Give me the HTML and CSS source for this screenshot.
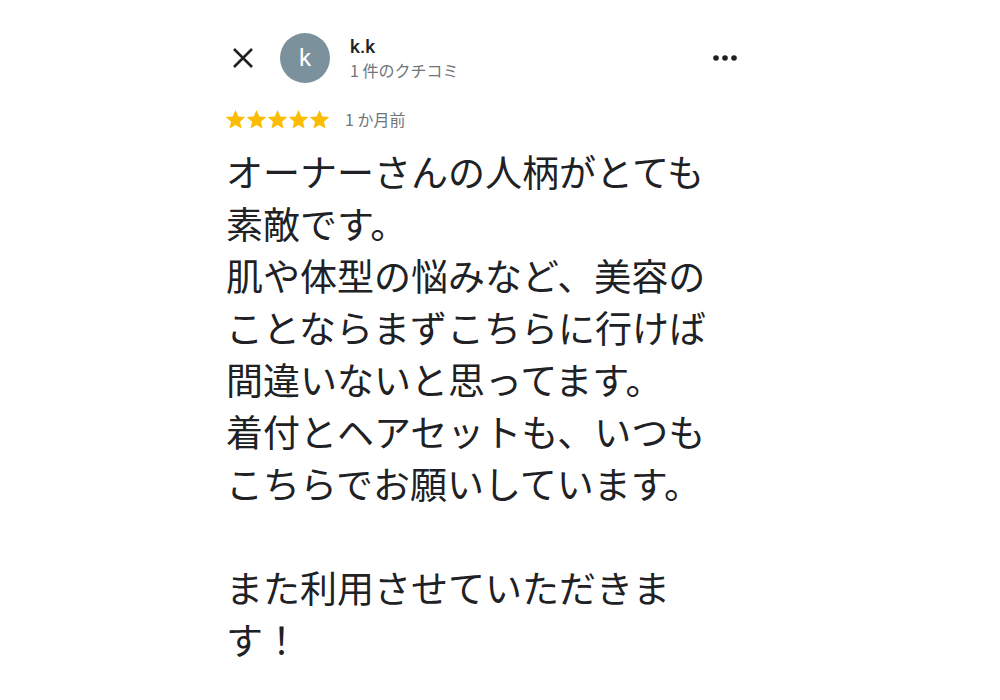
FILE: index.html
```html
<!DOCTYPE html>
<html lang="ja">
<head>
<meta charset="utf-8">
<link rel="stylesheet" href="styles.css">
</head>
<body>
<div class="review">
  <div class="header">
    <svg class="close" width="22" height="22" viewBox="0 0 22 22"><path d="M2 2L20 20M20 2L2 20" stroke="#202124" stroke-width="2.6" stroke-linecap="butt"/></svg>
    <div class="avatar">k</div>
    <div class="who">
      <div class="name">k.k</div>
      <div class="count">1 件のクチコミ</div>
    </div>
    <svg class="more" width="28" height="10" viewBox="0 0 28 10"><circle cx="5" cy="5" r="2.8" fill="#202124"/><circle cx="14" cy="5" r="2.8" fill="#202124"/><circle cx="23" cy="5" r="2.8" fill="#202124"/></svg>
  </div>
  <div class="meta">
    <div class="stars">
      <svg viewBox="0 0 24 24" width="21" height="21"><path d="M12 1.2l3.2 7.3 7.9.7-6 5.3 1.8 7.8L12 18.2 5.1 22.3l1.8-7.8-6-5.3 7.9-.7z" fill="#fbbc04"/></svg>
      <svg viewBox="0 0 24 24" width="21" height="21"><path d="M12 1.2l3.2 7.3 7.9.7-6 5.3 1.8 7.8L12 18.2 5.1 22.3l1.8-7.8-6-5.3 7.9-.7z" fill="#fbbc04"/></svg>
      <svg viewBox="0 0 24 24" width="21" height="21"><path d="M12 1.2l3.2 7.3 7.9.7-6 5.3 1.8 7.8L12 18.2 5.1 22.3l1.8-7.8-6-5.3 7.9-.7z" fill="#fbbc04"/></svg>
      <svg viewBox="0 0 24 24" width="21" height="21"><path d="M12 1.2l3.2 7.3 7.9.7-6 5.3 1.8 7.8L12 18.2 5.1 22.3l1.8-7.8-6-5.3 7.9-.7z" fill="#fbbc04"/></svg>
      <svg viewBox="0 0 24 24" width="21" height="21"><path d="M12 1.2l3.2 7.3 7.9.7-6 5.3 1.8 7.8L12 18.2 5.1 22.3l1.8-7.8-6-5.3 7.9-.7z" fill="#fbbc04"/></svg>
    </div>
    <span class="date">1 か月前</span>
  </div>
  <div class="body">オーナーさんの人柄がとても素敵です。<br>肌や体型の悩みなど、美容のことならまずこちらに行けば間違いないと思ってます。<br>着付とヘアセットも、いつもこちらでお願いしています。<br><br>また利用させていただきます！</div>
</div>
</body>
</html>
```

FILE: styles.css
```css
html, body {
  margin: 0;
  padding: 0;
  background: #ffffff;
}
body {
  font-family: "Noto Sans CJK JP", "Noto Sans", sans-serif;
  color: #202124;
}
.review {
  width: 514px;
  margin-left: 226px;
  padding-top: 33px;
}
.header {
  display: flex;
  align-items: center;
  height: 50px;
}
.close {
  margin-left: 6px;
  margin-right: 26px;
  flex: none;
}
.avatar {
  width: 50px;
  height: 50px;
  border-radius: 50%;
  background: #7b919c;
  color: #ffffff;
  font-family: Roboto, "Noto Sans", sans-serif;
  font-size: 24px;
  display: flex;
  align-items: center;
  justify-content: center;
  flex: none;
}
.who {
  flex: 1;
  margin-left: 20px;
  display: flex;
  flex-direction: column;
}
.name {
  font-family: Roboto, "Noto Sans", sans-serif;
  font-weight: 500;
  font-size: 19px;
  line-height: 22px;
  color: #202124;
}
.count {
  font-size: 16px;
  line-height: 20px;
  color: #70757a;
  margin-top: 2px;
}
.more {
  flex: none;
  margin-right: 1px;
}
.meta {
  display: flex;
  align-items: center;
  margin-top: 24px;
  height: 24px;
}
.stars {
  display: flex;
  margin-left: -1px;
}
.stars svg {
  display: block;
}
.date {
  margin-left: 15px;
  font-size: 16px;
  color: #70757a;
}
.body {
  margin-top: 14px;
  font-size: 37px;
  line-height: 52px;
  color: #202124;
  line-break: strict;
}
```
